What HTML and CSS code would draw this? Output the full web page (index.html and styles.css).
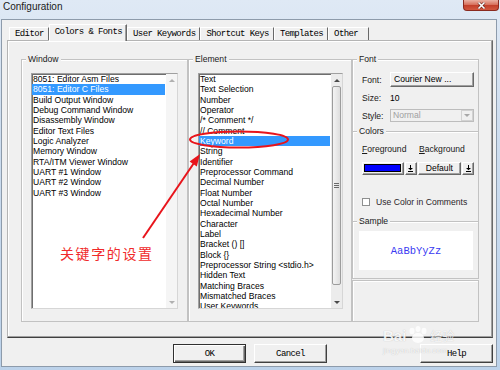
FILE: index.html
```html
<!DOCTYPE html>
<html lang="en">
<head>
    <meta charset="UTF-8">
    <meta name="viewport" content="width=device-width, initial-scale=1.0">
    <title>Configuration</title>
    <link rel="stylesheet" href="styles.css">
</head>
<body>
<div class="window">
    <div class="titlebar">
        <span class="title">Configuration</span>
        <div class="close-btn">
            <svg width="9" height="7" viewBox="0 0 9 7"><path d="M1.5 0.5L7.5 6.5M7.5 0.5L1.5 6.5" stroke="#5a1a12" stroke-width="2.6"/><path d="M1.5 0.5L7.5 6.5M7.5 0.5L1.5 6.5" stroke="#fff" stroke-width="1.6"/></svg>
        </div>
    </div>

    <div class="client">
        <div class="tabs">
            <div class="tab">Editor</div>
            <div class="tab active">Colors &amp; Fonts</div>
            <div class="tab">User Keywords</div>
            <div class="tab">Shortcut Keys</div>
            <div class="tab">Templates</div>
            <div class="tab">Other</div>
        </div>

        <div class="pane">
            <!-- Window list -->
            <div class="group">
                <span class="group-title">Window</span>
                <div class="listbox">
                    <ul class="items">
                        <li>8051: Editor Asm Files</li>
                        <li class="selected">8051: Editor C Files</li>
                        <li>Build Output Window</li>
                        <li>Debug Command Window</li>
                        <li>Disassembly Window</li>
                        <li>Editor Text Files</li>
                        <li>Logic Analyzer</li>
                        <li>Memory Window</li>
                        <li>RTA/ITM Viewer Window</li>
                        <li>UART #1 Window</li>
                        <li>UART #2 Window</li>
                        <li>UART #3 Window</li>
                    </ul>
                    <div class="scrollbar disabled">
                        <div class="sb-btn up"></div>
                        <div class="sb-track"></div>
                        <div class="sb-btn down"></div>
                    </div>
                </div>
            </div>

            <!-- Element list -->
            <div class="group group-element">
                <span class="group-title">Element</span>
                <div class="listbox">
                    <ul class="items">
                        <li>Text</li>
                        <li>Text Selection</li>
                        <li>Number</li>
                        <li>Operator</li>
                        <li>/* Comment */</li>
                        <li>// Comment</li>
                        <li class="selected">Keyword</li>
                        <li>String</li>
                        <li>Identifier</li>
                        <li>Preprocessor Command</li>
                        <li>Decimal Number</li>
                        <li>Float Number</li>
                        <li>Octal Number</li>
                        <li>Hexadecimal Number</li>
                        <li>Character</li>
                        <li>Label</li>
                        <li>Bracket () []</li>
                        <li>Block {}</li>
                        <li>Preprocessor String &lt;stdio.h&gt;</li>
                        <li>Hidden Text</li>
                        <li>Matching Braces</li>
                        <li>Mismatched Braces</li>
                        <li>User Keywords</li>
                    </ul>
                    <div class="scrollbar">
                        <div class="sb-btn up"></div>
                        <div class="sb-thumb"><div class="grip"></div></div>
                        <div class="sb-track"></div>
                        <div class="sb-btn down"></div>
                    </div>
                </div>
            </div>

            <!-- Font / colors / sample -->
            <div class="side">
                <div class="section section-font">
                    <span class="group-title">Font</span>
                    <div class="row row-font">
                        <span class="field-label">Font:</span>
                        <div class="push">Courier New ...</div>
                    </div>
                    <div class="row row-size">
                        <span class="field-label">Size:</span>
                        <span>10</span>
                    </div>
                    <div class="row row-style">
                        <span class="field-label">Style:</span>
                        <div class="combo">
                            <span class="combo-text">Normal</span>
                            <span class="combo-arrow"></span>
                        </div>
                    </div>
                </div>

                <div class="section section-colors">
                    <span class="group-title">Colors</span>
                    <div class="color-labels">
                        <span><u>F</u>oreground</span>
                        <span><u>B</u>ackground</span>
                    </div>
                    <div class="color-row">
                        <div class="swatch-btn"><div class="swatch"></div></div>
                        <div class="drop-btn">
                            <svg width="5" height="7" viewBox="0 0 5 7"><path d="M2.5 0V3" stroke="#000"/><path d="M0 3H5L2.5 5.3Z" fill="#000"/><path d="M0 6.5H5" stroke="#000"/></svg>
                        </div>
                        <div class="default-btn">Default</div>
                        <div class="drop-btn">
                            <svg width="5" height="7" viewBox="0 0 5 7"><path d="M2.5 0V3" stroke="#000"/><path d="M0 3H5L2.5 5.3Z" fill="#000"/><path d="M0 6.5H5" stroke="#000"/></svg>
                        </div>
                    </div>
                    <div class="row row-check">
                        <span class="check"></span>
                        <span class="check-label">Use Color in Comments</span>
                    </div>
                </div>

                <div class="section section-sample">
                    <span class="group-title">Sample</span>
                    <div class="sample">AaBbYyZz</div>
                </div>

                <div class="section-blank"></div>
            </div>
        </div>

        <div class="actions">
            <button class="btn btn-default">OK</button>
            <button class="btn">Cancel</button>
            <button class="btn btn-help">Help</button>
        </div>
    </div>

    <!-- red annotation drawn over the dialog -->
    <svg class="annotation" width="500" height="370" viewBox="0 0 500 370">
        <ellipse cx="239" cy="139.5" rx="49" ry="8" fill="none" stroke="#e8141b" stroke-width="2"/>
        <line x1="143" y1="238" x2="196" y2="160" stroke="#e8141b" stroke-width="2"/>
        <polygon points="200,154 196.8,166.6 189.6,161.4" fill="#e8141b"/>
    </svg>
    <div class="note">关键字的设置</div>

    <div class="watermark">
        <div class="wm-logo">
            <span class="wm-bai">Bai</span>
            <svg width="24" height="18" viewBox="0 0 24 18"><ellipse cx="6" cy="5" rx="2.5" ry="3.2" fill="#fff"/><ellipse cx="12" cy="3" rx="2.5" ry="3" fill="#fff"/><ellipse cx="18" cy="5" rx="2.5" ry="3.2" fill="#fff"/><ellipse cx="12" cy="12" rx="6" ry="5" fill="#fff"/></svg>
            <span class="wm-cn">经验</span>
        </div>
        <div class="wm-url">jingyan.baidu.com</div>
    </div>
</div>
</body>
</html>
```

FILE: styles.css
```css
* {
    margin: 0;
    padding: 0;
    box-sizing: border-box;
}

body {
    width: 500px;
    height: 370px;
    overflow: hidden;
    font-family: "Liberation Sans", Arial, sans-serif;
    font-size: 8.6px;
    color: #000;
}

.window {
    position: relative;
    width: 500px;
    height: 370px;
    padding: 0 3px 3px 1px;
    display: flex;
    flex-direction: column;
    background: linear-gradient(180deg, #dfe9f5 0%, #d0dff0 30%, #bcd2ea 100%);
}

/* title bar */
.titlebar {
    height: 19px;
    display: flex;
    align-items: flex-start;
    justify-content: space-between;
}

.title {
    padding: 2px 0 0 2px;
    font-size: 10px;
    line-height: 10px;
    color: #1b1b1b;
}

.close-btn {
    width: 36px;
    height: 11px;
    margin-right: -2px;
    border: 1px solid #8a2a1f;
    border-top: none;
    border-radius: 0 0 4px 4px;
    background: linear-gradient(180deg, #eab0a2 0%, #d8735f 45%, #c3402b 55%, #d2583f 100%);
    display: flex;
    align-items: center;
    justify-content: center;
}

.client {
    flex: 1;
    background: #f0f0f0;
    border: 1px solid #8d9bab;
    display: flex;
    flex-direction: column;
}

/* tabs */
.tabs {
    display: flex;
    align-items: flex-end;
    height: 16px;
    margin: 4px 0 0 7px;
    position: relative;
    z-index: 1;
}

.tab {
    height: 13px;
    padding: 0 4px 0 5px;
    line-height: 12px;
    font-family: "Liberation Mono", "Courier New", monospace;
    font-size: 9px;
    letter-spacing: -0.6px;
    border-top: 1px solid #fff;
    border-left: 1px solid #fff;
    border-right: 1px solid #696969;
    white-space: nowrap;
}

.tab.active {
    height: 17px;
    margin-bottom: -1px;
    line-height: 14px;
    background: #f0f0f0;
    box-shadow: inset -1px 0 0 #a0a0a0;
}

.tab:last-child {
    padding-right: 10px;
}

.pane {
    height: 298px;
    margin: 0 3px 0 5px;
    padding: 18px 13px 15px 13px;
    border: 1px solid;
    border-color: #b4b4b4 #696969 #404040 #b4b4b4;
    box-shadow: inset -1px -1px 0 #a0a0a0, inset 1px 1px 0 #fff;
    display: grid;
    grid-template-columns: 167px 164px 127px;
}

/* group boxes */
.group {
    border: 1px solid #c2c2c2;
    box-shadow: inset 1px 1px 0 #fff;
    display: flex;
    flex-direction: column;
    padding: 0 9px 12px 9px;
    min-height: 0;
}

.group-element {
    padding-right: 8px;
}

.group-title {
    align-self: flex-start;
    margin: -6px 0 0 -5px;
    padding: 0 2px;
    line-height: 10px;
    background: #f0f0f0;
    color: #1a1a1a;
}

.listbox {
    flex: 1;
    min-height: 0;
    margin-top: 9px;
    display: flex;
    overflow: hidden;
    background: #fff;
    border: 1px solid;
    border-color: #a0a0a0 #d6d6d6 #d6d6d6 #a0a0a0;
    box-shadow: inset 1px 1px 0 #6e6e6e;
}

.items {
    flex: 1;
    list-style: none;
    padding-right: 1px;
    line-height: 10.33px;
    overflow: hidden;
}

.items li {
    padding-left: 1px;
    white-space: nowrap;
}

.items li.selected {
    background: #3399ff;
    color: #fff;
}

/* scrollbars */
.scrollbar {
    width: 11px;
    display: flex;
    flex-direction: column;
    background: #ececec;
}

.scrollbar.disabled {
    background: #f5f5f5;
}

.sb-btn {
    height: 12px;
    display: flex;
    align-items: center;
    justify-content: center;
}

.sb-btn::before {
    content: "";
    border-left: 3px solid transparent;
    border-right: 3px solid transparent;
}

.sb-btn.up::before {
    border-bottom: 3px solid #4a4a4a;
}

.sb-btn.down::before {
    border-top: 3px solid #4a4a4a;
}

.scrollbar.disabled .sb-btn.up::before {
    border-bottom-color: #b0b0b0;
}

.scrollbar.disabled .sb-btn.down::before {
    border-top-color: #b0b0b0;
}

.sb-track {
    flex: 1;
}

.sb-thumb {
    height: 199px;
    margin: 0 1px;
    border: 1px solid #9c9c9c;
    border-radius: 2px;
    background: linear-gradient(90deg, #f4f4f4, #dedede);
    display: flex;
    align-items: center;
    justify-content: center;
}

.grip {
    width: 5px;
    height: 5px;
    background: repeating-linear-gradient(180deg, #6a6a6a 0 1px, transparent 1px 2px);
}

/* right column */
.side {
    display: flex;
    flex-direction: column;
}

.section {
    border: 1px solid #c2c2c2;
    border-bottom: none;
    box-shadow: inset 1px 1px 0 #fff;
    padding: 0 4px 0 9px;
    display: flex;
    flex-direction: column;
}

.section-font {
    height: 72px;
}

.section-colors {
    height: 90px;
}

.section-sample {
    height: 58px;
    padding: 0 5px 0 6px;
    border-bottom: 1px solid #c2c2c2;
}

.section-sample .group-title {
    margin-left: -2px;
}

.section-blank {
    flex: 1;
    margin-top: 1px;
    border: 1px solid #c2c2c2;
    box-shadow: inset 1px 1px 0 #fff;
}

.row {
    display: flex;
    align-items: center;
}

.field-label {
    width: 28px;
    color: #1a1a1a;
}

.row-font {
    height: 15px;
    margin-top: 8px;
}

.row-size {
    height: 10px;
    margin-top: 6px;
}

.row-style {
    height: 13px;
    margin-top: 6px;
}

.push {
    flex: 1;
    height: 15px;
    padding-left: 3px;
    line-height: 13px;
    border: 1px solid;
    border-color: #fff #696969 #696969 #fff;
    box-shadow: inset -1px -1px 0 #a0a0a0;
    white-space: nowrap;
}

.combo {
    flex: 1;
    height: 13px;
    display: flex;
    border: 1px solid #bdbdbd;
    background: #f0f0f0;
    color: #a0a0a0;
}

.combo-text {
    flex: 1;
    padding-left: 2px;
    line-height: 11px;
}

.combo-arrow {
    width: 12px;
    border: 1px solid #d2d2d2;
    display: flex;
    align-items: center;
    justify-content: center;
}

.combo-arrow::before {
    content: "";
    border-left: 3px solid transparent;
    border-right: 3px solid transparent;
    border-top: 3px solid #a8a8a8;
}

.color-labels {
    display: grid;
    grid-template-columns: 57px auto;
    height: 10px;
    line-height: 10px;
    margin-top: 8px;
    color: #1a1a1a;
}

.color-row {
    display: flex;
    gap: 1px;
    height: 13px;
    margin-top: 8px;
}

.swatch-btn,
.drop-btn,
.default-btn {
    border: 1px solid;
    border-color: #fff #696969 #696969 #fff;
    box-shadow: inset -1px -1px 0 #a0a0a0;
}

.swatch-btn {
    width: 42px;
    padding: 1px 2px 2px 1px;
}

.swatch {
    height: 100%;
    background: #0000ff;
    border: 1px solid #000;
}

.drop-btn {
    width: 12px;
    display: flex;
    align-items: center;
    justify-content: center;
}

.default-btn {
    width: 44px;
    text-align: center;
    line-height: 11px;
}

.row-check {
    height: 10px;
    margin-top: 22px;
}

.check {
    width: 8px;
    height: 8px;
    margin-right: 6px;
    border: 1px solid #8e8f8f;
    background: #fff;
}

.check-label {
    color: #2a1e2a;
}

.sample {
    margin-top: 5px;
    height: 39px;
    background: #fff;
    display: flex;
    align-items: center;
    justify-content: center;
    font-family: "Liberation Mono", "Courier New", monospace;
    font-size: 10.5px;
    color: #3a3af2;
}

/* dialog buttons */
.actions {
    display: flex;
    gap: 8px;
    padding: 6px 3px 0 171px;
}

.btn {
    width: 73px;
    height: 19px;
    font-family: "Liberation Mono", "Courier New", monospace;
    font-size: 9px;
    letter-spacing: -0.6px;
    color: #000;
    background: #f0f0f0;
    border: 1px solid;
    border-color: #fff #404040 #404040 #fff;
    box-shadow: inset -1px -1px 0 #a0a0a0;
}

.btn-default {
    border-color: #303030;
    box-shadow: inset 1px 1px 0 #fff, inset -1px -1px 0 #696969, inset -2px -2px 0 #a0a0a0;
}

.btn-help {
    margin-left: auto;
}

/* overlays */
.annotation {
    position: absolute;
    top: 0;
    left: 0;
    pointer-events: none;
}

.note {
    position: absolute;
    left: 60px;
    top: 243px;
    font-family: "Noto Sans CJK SC", sans-serif;
    font-size: 14px;
    line-height: 20px;
    letter-spacing: 1.6px;
    color: #f02a2a;
}

.watermark {
    position: absolute;
    left: 383px;
    top: 324px;
    color: rgba(255, 255, 255, 0.9);
    text-shadow: 0 0 1px rgba(0, 0, 0, 0.25);
    pointer-events: none;
}

.wm-logo {
    display: flex;
    align-items: center;
    height: 22px;
}

.wm-logo svg {
    opacity: 0.85;
}

.wm-bai {
    font-size: 15px;
    font-weight: bold;
}

.wm-cn {
    font-family: "Noto Sans CJK SC", sans-serif;
    font-size: 12px;
}

.wm-url {
    font-size: 8px;
    line-height: 10px;
}
```
